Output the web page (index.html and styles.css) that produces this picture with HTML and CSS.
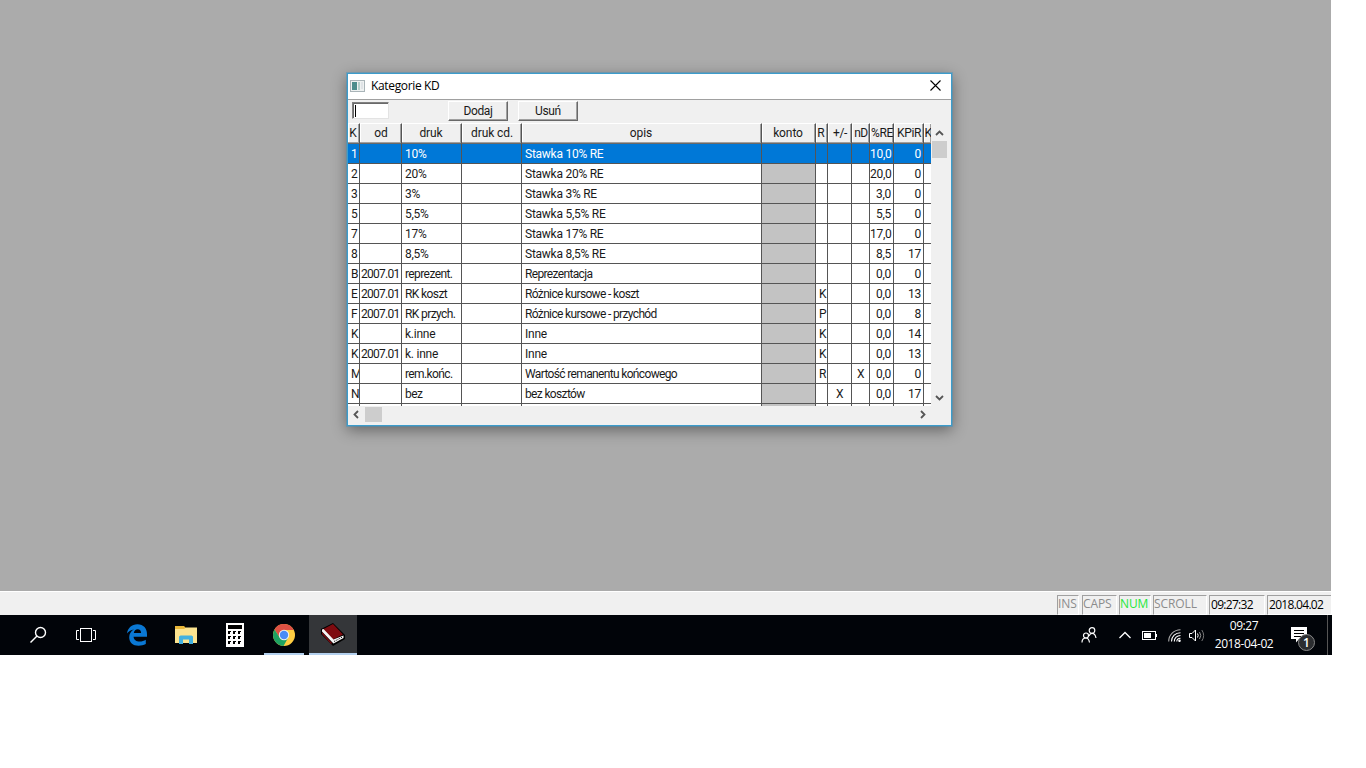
FILE: index.html
```html
<!DOCTYPE html>
<html lang="pl">
<head>
	<meta charset="utf-8">
	<title>Kategorie KD</title>
	<link rel="stylesheet" href="styles.css">
</head>
<body>

<div class="screen">
	<div class="desktop">
		<div class="window">
			<div class="titlebar">
				<svg class="app-icon" width="15" height="12" viewBox="0 0 15 12">
					<rect x="0.5" y="0.5" width="14" height="11" fill="#eef1f1" stroke="#a9b4b8"/>
					<rect x="2" y="2" width="5" height="8" fill="#4b8c8c"/>
					<rect x="8" y="2" width="2" height="8" fill="#b5d0cc"/>
					<rect x="11" y="2" width="2" height="7" fill="#dfe3e6"/>
				</svg>
				<span class="title">Kategorie KD</span>
				<svg class="close" width="11" height="11" viewBox="0 0 11 11">
					<path d="M0.5 0.5L10.5 10.5M10.5 0.5L0.5 10.5" stroke="#000" stroke-width="1.1" fill="none"/>
				</svg>
			</div>
			<div class="toolbar">
				<div class="field"></div>
				<div class="btn">Dodaj</div>
				<div class="btn">Usuń</div>
			</div>
			<div class="content">
				<div class="table">
					<div class="row head">
						<span>K</span><span>od</span><span>druk</span><span>druk cd.</span><span>opis</span><span>konto</span><span>R</span><span>+/-</span><span>nD</span><span>%RE</span><span>KPiR</span><span>K</span>
					</div>
					<div class="row selected">
						<span>1</span><span></span><span>10%</span><span></span><span>Stawka 10% RE</span><span></span><span></span><span></span><span></span><span>10,0</span><span>0</span><span></span>
					</div>
					<div class="row">
						<span>2</span><span></span><span>20%</span><span></span><span>Stawka 20% RE</span><span></span><span></span><span></span><span></span><span>20,0</span><span>0</span><span></span>
					</div>
					<div class="row">
						<span>3</span><span></span><span>3%</span><span></span><span>Stawka 3% RE</span><span></span><span></span><span></span><span></span><span>3,0</span><span>0</span><span></span>
					</div>
					<div class="row">
						<span>5</span><span></span><span>5,5%</span><span></span><span>Stawka 5,5% RE</span><span></span><span></span><span></span><span></span><span>5,5</span><span>0</span><span></span>
					</div>
					<div class="row">
						<span>7</span><span></span><span>17%</span><span></span><span>Stawka 17% RE</span><span></span><span></span><span></span><span></span><span>17,0</span><span>0</span><span></span>
					</div>
					<div class="row">
						<span>8</span><span></span><span>8,5%</span><span></span><span>Stawka 8,5% RE</span><span></span><span></span><span></span><span></span><span>8,5</span><span>17</span><span></span>
					</div>
					<div class="row words">
						<span>B</span><span>2007.01</span><span>reprezent.</span><span></span><span>Reprezentacja</span><span></span><span></span><span></span><span></span><span>0,0</span><span>0</span><span></span>
					</div>
					<div class="row words">
						<span>E</span><span>2007.01</span><span>RK koszt</span><span></span><span>Różnice kursowe - koszt</span><span></span><span>K</span><span></span><span></span><span>0,0</span><span>13</span><span></span>
					</div>
					<div class="row words">
						<span>F</span><span>2007.01</span><span>RK przych.</span><span></span><span>Różnice kursowe - przychód</span><span></span><span>P</span><span></span><span></span><span>0,0</span><span>8</span><span></span>
					</div>
					<div class="row">
						<span>K</span><span></span><span>k.inne</span><span></span><span>Inne</span><span></span><span>K</span><span></span><span></span><span>0,0</span><span>14</span><span></span>
					</div>
					<div class="row">
						<span>K</span><span>2007.01</span><span>k. inne</span><span></span><span>Inne</span><span></span><span>K</span><span></span><span></span><span>0,0</span><span>13</span><span></span>
					</div>
					<div class="row words">
						<span>M</span><span></span><span>rem.końc.</span><span></span><span>Wartość remanentu końcowego</span><span></span><span>R</span><span></span><span>X</span><span>0,0</span><span>0</span><span></span>
					</div>
					<div class="row words">
						<span>N</span><span></span><span>bez</span><span></span><span>bez kosztów</span><span></span><span></span><span>X</span><span></span><span>0,0</span><span>17</span><span></span>
					</div>
					<div class="row">
						<span></span><span></span><span></span><span></span><span></span><span></span><span></span><span></span><span></span><span></span><span></span><span></span>
					</div>
				</div>
				<div class="vscroll">
					<svg width="9" height="6" viewBox="0 0 9 6"><path d="M1 5L4.5 1.5L8 5" stroke="#555" stroke-width="1.8" fill="none"/></svg>
					<div class="vthumb"></div>
					<svg class="down" width="9" height="6" viewBox="0 0 9 6"><path d="M1 1L4.5 4.5L8 1" stroke="#555" stroke-width="1.8" fill="none"/></svg>
				</div>
			</div>
			<div class="hscroll">
				<svg width="6" height="9" viewBox="0 0 6 9"><path d="M5 1L1.5 4.5L5 8" stroke="#555" stroke-width="1.8" fill="none"/></svg>
				<div class="hthumb"></div>
				<svg class="right" width="6" height="9" viewBox="0 0 6 9"><path d="M1 1L4.5 4.5L1 8" stroke="#555" stroke-width="1.8" fill="none"/></svg>
			</div>
		</div>
	</div>

	<div class="statusbar">
		<div class="cell ins">INS</div>
		<div class="cell caps">CAPS</div>
		<div class="cell num">NUM</div>
		<div class="cell scroll">SCROLL</div>
		<div class="cell time">09:27:32</div>
		<div class="cell date">2018.04.02</div>
	</div>

	<div class="taskbar">
		<div class="task search">
			<svg width="18" height="18" viewBox="0 0 18 18" fill="none" stroke="#fff" stroke-width="1.4">
				<circle cx="11.5" cy="6.5" r="5"/>
				<path d="M8 10L1.5 16.5"/>
			</svg>
		</div>
		<div class="task view">
			<svg width="20" height="16" viewBox="0 0 20 16" fill="none" stroke="#fff">
				<rect x="4.5" y="1.5" width="11" height="13"/>
				<path d="M3 3.5H0.5V12.5H3M17 3.5H19.5V12.5H17"/>
			</svg>
		</div>
		<div class="task">
			<svg width="20" height="22" viewBox="0 0 20 22">
				<path fill="#0a78d4" d="M0 9.6C0.7 4 4.8 0.3 10.4 0.3C16.6 0.3 20 4.6 20 10.2V12.8H6.6C6.8 16 9.4 17.6 12.6 17.6C15 17.6 17 16.9 18.8 15.8V20C16.6 21.2 14.2 21.7 11.6 21.7C5.8 21.7 2.2 18.4 2.2 13.2C2.2 9.8 4 7 6.9 5.5C4.2 5.8 1.6 7.2 0 9.6ZM6.8 9.1H14.1C14.1 6.6 12.8 5.2 10.7 5.2C8.6 5.2 7.2 6.7 6.8 9.1Z"/>
			</svg>
		</div>
		<div class="task">
			<svg width="22" height="18" viewBox="0 0 22 18">
				<path fill="#e8b73a" d="M0 0H9L11 2H21V5H0Z"/>
				<path fill="#fbe38f" d="M0 3H9L11 1.5H22V17H0Z"/>
				<path fill="#43b1e0" d="M4 18V10.5L5.5 9.5H16.5L18 10.5V18H14V13.5H8V18Z"/>
			</svg>
		</div>
		<div class="task">
			<svg width="18" height="24" viewBox="0 0 18 24">
				<rect width="18" height="24" fill="#fff"/>
				<path fill="#000" d="M2 2H16V6H2ZM2 8H5V9H4V11H2ZM7 8H10V9H9V11H7ZM12 8H15V9H14V11H12ZM2 13H5V14H4V16H2ZM7 13H10V14H9V16H7ZM12 13H15V14H14V16H12ZM2 18H5V19H4V21H2ZM7 18H10V19H9V21H7ZM12 18H15V19H14V21H12Z"/>
			</svg>
		</div>
		<div class="task running chrome">
			<svg width="22" height="22" viewBox="0 0 22 22">
				<circle cx="11" cy="11" r="11" fill="#ffcd42"/>
				<path fill="#dd5144" d="M11 11V6H20.8A11 11 0 0 0 1.5 5.5L6.7 13.5Z"/>
				<path fill="#1da362" d="M1.5 5.5A11 11 0 0 0 10.5 22L15.3 13.5L11 11L6.7 13.5Z"/>
				<circle cx="11" cy="11" r="5.2" fill="#f1f1f1"/>
				<circle cx="11" cy="11" r="4.2" fill="#4a8bf5"/>
			</svg>
		</div>
		<div class="task running active">
			<svg width="24" height="24" viewBox="0 0 24 24">
				<path fill="#000" d="M0 6L12 0L24 12V16L12 23L0 11Z"/>
				<path fill="#7e0b10" d="M1.5 6.5L12 1L22 11.5L12 16.5Z"/>
				<path fill="#7e0b10" d="M1 9L10.5 19.5V21.5L1 11Z"/>
				<path fill="#f6f6f6" d="M1 6.5L2.5 6L12.5 16.5L22.5 12.5V15L12.5 20.5L10.5 18.5L1 8.5Z"/>
				<path stroke="#000" stroke-dasharray="1 1" d="M13 18.5L21.5 14"/>
			</svg>
		</div>

		<div class="tray">
			<svg class="people" width="16" height="17" viewBox="0 0 16 17" fill="none" stroke="#fff" stroke-width="1.2">
				<circle cx="5" cy="8.5" r="2.5"/>
				<path d="M1 15.5C1 12.500 2.500 11 5 11S8 12.500 8.500 15.500"/>
				<circle cx="11" cy="3.500" r="2.800"/>
				<path d="M8 9C8.800 7 9.500 6.300 11 6.300C13.500 6.300 14.500 8 15 11"/>
			</svg>
			<svg class="up" width="12" height="8" viewBox="0 0 12 8" fill="none" stroke="#fff" stroke-width="1.3"><path d="M0.5 7L6 1.5L11.5 7"/></svg>
			<svg class="battery" width="15" height="9" viewBox="0 0 15 9">
				<rect x="0.5" y="0.5" width="13" height="8" fill="none" stroke="#fff"/>
				<rect x="2" y="2" width="7" height="5" fill="#fff"/>
				<rect x="14" y="3" width="1" height="3" fill="#fff"/>
			</svg>
			<svg class="wifi" width="13" height="13" viewBox="0 0 13 13" fill="none" stroke="#fff" stroke-width="1.1">
				<path d="M0.7 12.5C0.7 6 6 0.8 12.5 0.8" stroke="#aaa"/>
				<path d="M3.5 12.5C3.5 7.5 7.5 3.7 12.5 3.7"/>
				<path d="M6.3 12.5C6.3 9 9 6.5 12.5 6.5"/>
				<path d="M8.8 12.5C8.8 10.5 10.5 9.2 12.5 9.2"/>
				<circle cx="11.5" cy="11.8" r="0.7" fill="#fff"/>
			</svg>
			<svg class="volume" width="16" height="13" viewBox="0 0 16 13" fill="none" stroke="#fff">
				<path d="M0.5 4.5H3L6.5 1V12L3 8.5H0.5Z"/>
				<path d="M8.5 4.5Q9.8 6.5 8.5 8.5"/>
				<path d="M10.5 3Q13 6.5 10.5 10" stroke="#999"/>
				<path d="M12.8 1Q16.5 6.5 12.8 12" stroke="#777"/>
			</svg>
			<div class="clock"><span>09:27</span><span>2018-04-02</span></div>
			<div class="notify">
				<svg width="16" height="16" viewBox="0 0 16 16">
					<path fill="#fff" d="M0 0H16V12H8L5 15.5V12H0Z"/>
					<path stroke="#000" d="M3 3.5H13M3 6.5H13M3 9.5H10"/>
				</svg>
				<span class="badge">1</span>
			</div>
			<div class="show-desktop"></div>
		</div>
	</div>
</div>

</body>
</html>
```

FILE: styles.css
```css
*{
	margin: 0;
	padding: 0;
	box-sizing: border-box;
}

body{
	background-color: #fff;
	overflow: hidden;
	font-family: Roboto, "Liberation Sans", Arial, sans-serif;
}

svg{
	display: block;
	flex: none;
}

.screen{
	width: 1332px;
}

.desktop{
	width: 1331px;
	height: 591px;
	padding: 73px 0 0 347px;
	background-color: #ababab;
}

/* window */
.window{
	width: 605px;
	height: 353px;
	border: 1px solid #3c9ccb;
	background-color: #f0f0f0;
	box-shadow: 0 0 0 1px rgba(50,150,205,0.4), 0 4px 14px rgba(0,0,0,0.42);
	display: flex;
	flex-direction: column;
}

.titlebar{
	height: 26px;
	flex: none;
	background-color: #fff;
	border-bottom: 1px solid #a0a0a0;
	display: flex;
	align-items: center;
	padding: 0 10px 2px 2px;
}

.title{
	margin-left: 6px;
	font: 12px "Open Sans", "Noto Sans", sans-serif;
	letter-spacing: -0.35px;
}

.close{
	margin-left: auto;
}

.toolbar{
	height: 23px;
	flex: none;
	display: flex;
	padding: 1px 0 0 4px;
}

.field{
	width: 37px;
	height: 17px;
	margin: 1px 59px 0 0;
	background-color: #fff;
	border: 1px solid #808080;
	border-right-color: #e3e3e3;
	border-bottom-color: #e3e3e3;
	box-shadow: inset 1px 1px #696969;
	padding: 2px 0 0 2px;
}

.field::before{
	content: "";
	display: block;
	width: 1px;
	height: 12px;
	background-color: #000;
}

.btn{
	width: 60px;
	height: 20px;
	margin-right: 10px;
	border: 1px solid;
	border-color: #fff #696969 #696969 #fff;
	box-shadow: inset -1px -1px #a0a0a0;
	font-size: 12px;
	line-height: 18px;
	text-align: center;
	letter-spacing: -0.35px;
	color: #1a1a1a;
}

/* grid */
.content{
	height: 283px;
	flex: none;
	display: flex;
}

.table{
	width: 583px;
	overflow: hidden;
	background-color: #fff;
}

.row{
	height: 20px;
	display: grid;
	grid-template-columns: 12px 42px 60px 60px 240px 54px 12px 24px 18px 24px 30px 7px;
	font-size: 12px;
	line-height: 20px;
	letter-spacing: -0.25px;
	color: #1a1a1a;
}

.row span{
	height: 20px;
	padding-left: 3px;
	border-right: 1px solid #555;
	border-bottom: 1px solid #555;
	white-space: pre;
	overflow: hidden;
}

.row.words span{
	letter-spacing: -0.6px;
}

.row.words span:nth-child(5){
	letter-spacing: -0.65px;
}

.row span:nth-child(2),
.row.words span:nth-child(2){
	padding-left: 1px;
	letter-spacing: -0.75px;
}

.row span:nth-child(6){
	background-color: #c3c3c3;
}

.row span:nth-child(8),
.row span:nth-child(9){
	padding-left: 0;
	text-align: center;
}

.row span:nth-child(10),
.row span:nth-child(11),
.row.words span:nth-child(10),
.row.words span:nth-child(11){
	padding: 0 2px 0 0;
	text-align: right;
	letter-spacing: -0.25px;
}

.row span:last-child{
	border-right: 0;
}

.row.head{
	height: 21px;
}

.row.head span{
	height: 21px;
	padding: 0 1px 0 0;
	background-color: #f0f0f0;
	border-top: 1px solid #fff;
	border-bottom-color: #696969;
	box-shadow: inset -1px -1px #a0a0a0, inset 1px 0 #fff;
	line-height: 19px;
	letter-spacing: -0.1px;
	display: flex;
	justify-content: center;
}

.row.head span:nth-child(2),
.row.head span:nth-child(4){
	padding: 0 0 0 1px;
}

.row.head span:nth-child(8),
.row.head span:nth-child(9),
.row.head span:nth-child(10),
.row.head span:nth-child(11),
.row.head span:last-child{
	padding: 0 0 0 1px;
	letter-spacing: -0.4px;
}

.row.selected span{
	background-color: #0078d7;
	color: #fff;
}

.vscroll{
	width: 17px;
	padding-top: 7px;
	display: flex;
	flex-direction: column;
	align-items: center;
}

.vthumb{
	width: 15px;
	height: 17px;
	margin-top: 5px;
	background-color: #cdcdcd;
}

.down{
	margin: auto 0 5px;
}

.hscroll{
	height: 17px;
	display: flex;
	align-items: center;
	padding: 0 25px 0 5px;
}

.hthumb{
	width: 17px;
	height: 15px;
	margin-left: 6px;
	background-color: #cdcdcd;
}

.right{
	margin-left: auto;
}

/* status bar */
.statusbar{
	width: 1331px;
	height: 24px;
	padding: 3px 0 0 1057px;
	background-color: #f0f0f0;
	border-top: 1px solid #fff;
	display: flex;
	font: 12px/19px "Open Sans", "Noto Sans", sans-serif;
}

.cell{
	height: 20px;
	border: 1px solid;
	border-color: #a0a0a0 #fff #fff #a0a0a0;
	color: #8c8c8c;
	white-space: nowrap;
	flex: none;
	line-height: 16px;
	letter-spacing: -0.1px;
}

.ins{ width: 22px; margin-right: 3px; }
.caps{ width: 35px; margin-right: 2px; }
.num{ width: 32px; margin-right: 2px; color: #1fe83a; }
.scroll{ width: 54px; margin-right: 2px; }
.time{ width: 56px; margin-right: 2px; }
.date{ width: 64px; border-right: 0; }

.time,
.date{
	color: #000;
	line-height: 18px;
	padding-left: 1px;
	letter-spacing: -0.7px;
}

/* task bar */
.taskbar{
	height: 40px;
	background-color: #010409;
	display: flex;
	padding-left: 14px;
}

.task{
	width: 49px;
	height: 40px;
	flex: none;
	display: flex;
	align-items: center;
	justify-content: center;
}

.search{ width: 48px; }

.view{
	width: 48px;
	margin-right: 2px;
}

.running{
	border-bottom: 2px solid #b3d0ee;
	padding-top: 2px;
}

.chrome{
	width: 40px;
	margin: 0 5px 0 5px;
}

.active{
	width: 48px;
	background-color: #343639;
}

.tray{
	margin-left: auto;
	display: flex;
	align-items: center;
	color: #fff;
}

.people{ margin-right: 22px; }
.up{ margin-right: 11px; }
.battery{ margin-right: 11px; }
.wifi{ margin-right: 8px; }
.volume{ margin-right: 7px; }

.clock{
	width: 64px;
	display: flex;
	flex-direction: column;
	text-align: center;
	font: 12px/18px "Open Sans", "Noto Sans", sans-serif;
	letter-spacing: -0.4px;
}

.notify{
	position: relative;
	margin: 0 20px 0 15px;
}

.badge{
	position: absolute;
	left: 7px;
	top: 7px;
	width: 17px;
	height: 17px;
	border: 1px solid #888;
	border-radius: 50%;
	background-color: #2b2d30;
	font: 600 12px/15px "Open Sans", sans-serif;
	text-align: center;
}

.show-desktop{
	width: 5px;
	height: 40px;
	border-left: 1px solid #555;
}
```
